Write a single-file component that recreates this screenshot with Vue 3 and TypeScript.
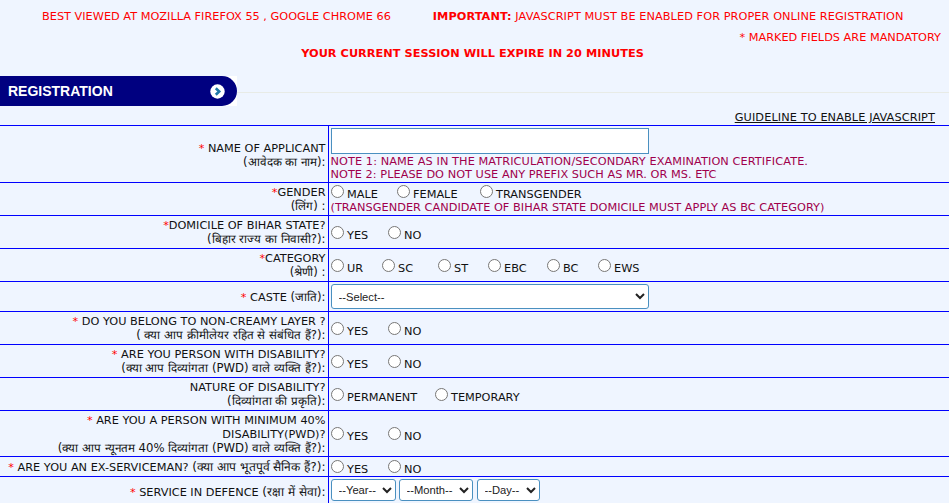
<script setup lang="ts">
interface Row {
  star?: string
  lines: string[]
  hindi: string
  opts: string[]
  h: number
  cols?: string
}
const rows: Row[] = [
  { star: '*', lines: ['DOMICILE OF BIHAR STATE?'], hindi: '(बिहार राज्य का निवासी?):', opts: ['YES', 'NO'], h: 33 },
  { star: '*', lines: ['CATEGORY'], hindi: '(श्रेणी) :', opts: ['UR', 'SC', 'ST', 'EBC', 'BC', 'EWS'], h: 33, cols: 'category' },
]
const after: Row[] = [
  { star: '* ', lines: ['DO YOU BELONG TO NON-CREAMY LAYER ?'], hindi: '( क्या आप क्रीमीलेयर रहित से संबंधित हैं?):', opts: ['YES', 'NO'], h: 33 },
  { star: '* ', lines: ['ARE YOU PERSON WITH DISABILITY?'], hindi: '(क्या आप दिव्यांगता (PWD) वाले व्यक्ति हैं?):', opts: ['YES', 'NO'], h: 33 },
  { lines: ['NATURE OF DISABILITY?'], hindi: '(दिव्यांगता की प्रकृति):', opts: ['PERMANENT', 'TEMPORARY'], h: 33, cols: 'nature' },
  { star: '* ', lines: ['ARE YOU A PERSON WITH MINIMUM 40%', 'DISABILITY(PWD)?'], hindi: '(क्या आप न्यूनतम 40% दिव्यांगता (PWD) वाले व्यक्ति हैं?):', opts: ['YES', 'NO'], h: 46 },
]
</script>

<template>
  <div class="page">
    <div class="notice-top">
      <span class="best">BEST VIEWED AT MOZILLA FIREFOX 55 , GOOGLE CHROME 66</span>
      <span class="important"><b>IMPORTANT:</b> JAVASCRIPT MUST BE ENABLED FOR PROPER ONLINE REGISTRATION</span>
    </div>
    <div class="mandatory">* MARKED FIELDS ARE MANDATORY</div>
    <div class="session">YOUR CURRENT SESSION WILL EXPIRE IN 20 MINUTES</div>

    <div class="banner-row">
      <div class="banner-back">
        <div class="banner">
          <span>REGISTRATION</span>
          <svg width="15" height="15" viewBox="0 0 15 15">
            <circle cx="7.5" cy="7.5" r="7.2" fill="#fff" />
            <path d="M5.8 4.2 L9.2 7.5 L5.8 10.8" fill="none" stroke="#1f78a8" stroke-width="2.6" />
          </svg>
        </div>
      </div>
      <div class="rule"></div>
    </div>

    <div class="guide"><a href="#">GUIDELINE TO ENABLE JAVASCRIPT</a></div>

    <table class="form">
      <tbody>
        <tr style="height: 57px">
          <th class="name"><span class="star">* </span>NAME OF APPLICANT<br /><span class="hi">(आवेदक का नाम):</span></th>
          <td class="top">
            <input class="text" type="text" />
            <div class="note">NOTE 1: NAME AS IN THE MATRICULATION/SECONDARY EXAMINATION CERTIFICATE.</div>
            <div class="note tight">NOTE 2: PLEASE DO NOT USE ANY PREFIX SUCH AS MR. OR MS. ETC</div>
          </td>
        </tr>
        <tr style="height: 33px">
          <th><span class="star">*</span>GENDER<br /><span class="hi">(लिंग) :</span></th>
          <td class="top">
            <div class="radios gender">
              <label><input type="radio" name="gender" /><span>MALE</span></label>
              <label><input type="radio" name="gender" /><span>FEMALE</span></label>
              <label><input type="radio" name="gender" /><span>TRANSGENDER</span></label>
            </div>
            <div class="note tight">(TRANSGENDER CANDIDATE OF BIHAR STATE DOMICILE MUST APPLY AS BC CATEGORY)</div>
          </td>
        </tr>
        <tr v-for="(r, i) in rows" :key="'a' + i" :style="{ height: r.h + 'px' }">
          <th>
            <span v-if="r.star" class="star">{{ r.star }}</span>
            <template v-for="l in r.lines" :key="l">{{ l }}<br /></template>
            <span class="hi">{{ r.hindi }}</span>
          </th>
          <td>
            <div class="radios" :class="r.cols">
              <label v-for="o in r.opts" :key="o"><input type="radio" :name="'a' + i" /><span>{{ o }}</span></label>
            </div>
          </td>
        </tr>
        <tr style="height: 30px">
          <th><span class="star">* </span>CASTE <span class="hi">(जाति):</span></th>
          <td><select class="caste"><option>--Select--</option></select></td>
        </tr>
        <tr v-for="(r, i) in after" :key="'b' + i" :style="{ height: r.h + 'px' }">
          <th>
            <span v-if="r.star" class="star">{{ r.star }}</span>
            <template v-for="l in r.lines" :key="l">{{ l }}<br /></template>
            <span class="hi">{{ r.hindi }}</span>
          </th>
          <td>
            <div class="radios" :class="r.cols">
              <label v-for="o in r.opts" :key="o"><input type="radio" :name="'b' + i" /><span>{{ o }}</span></label>
            </div>
          </td>
        </tr>
        <tr style="height: 20px">
          <th><span class="star">* </span>ARE YOU AN EX-SERVICEMAN? <span class="hi wide">(क्या आप भूतपूर्व सैनिक हैं?):</span></th>
          <td>
            <div class="radios">
              <label><input type="radio" name="ex" /><span>YES</span></label>
              <label><input type="radio" name="ex" /><span>NO</span></label>
            </div>
          </td>
        </tr>
        <tr style="height: 30px">
          <th><span class="star">* </span>SERVICE IN DEFENCE <span class="hi wide">(रक्षा में सेवा):</span></th>
          <td class="dates">
            <select class="year"><option>--Year--</option></select>
            <select class="month"><option>--Month--</option></select>
            <select class="day"><option>--Day--</option></select>
          </td>
        </tr>
      </tbody>
    </table>
  </div>
</template>

<style>
html, body { margin: 0; background: #eff5ff; overflow: hidden; }
</style>

<style scoped>
.page {
  width: 949px;
  font-family: "DejaVu Sans", Verdana, sans-serif;
  font-size: 11.3px;
  color: #111;
}
.notice-top {
  display: flex;
  gap: 42px;
  padding: 10px 0 0 42px;
  height: 16px;
  line-height: 13px;
  color: #f00;
}
.important { letter-spacing: 0.07px; }
.mandatory {
  color: #f00;
  text-align: right;
  padding-right: 8px;
  line-height: 13px;
  height: 16px;
  margin-top: 5px;
}
.session {
  color: #f00;
  font-weight: bold;
  text-align: center;
  line-height: 13px;
  height: 29px;
  letter-spacing: 0.04px;
  margin-left: -4px;
}
.banner-row { display: flex; align-items: center; height: 30px; }
.banner-back { background: #fff; flex: none; }
.banner {
  width: 237px;
  height: 30px;
  box-sizing: border-box;
  background: #000080;
  border-radius: 0 15px 15px 0;
  color: #fff;
  font: bold 14px "Liberation Sans", Arial, sans-serif;
  display: flex;
  align-items: center;
  justify-content: space-between;
  padding: 0 12px 0 8px;
}
.rule { flex: 1; height: 1px; background: #e8ebe6; margin-top: 2px; }
.guide { text-align: right; padding: 5px 14px 0 0; height: 14px; line-height: 14px; letter-spacing: 0.1px; }
.guide a { color: #111; text-decoration: underline; }
.form { width: 949px; border-collapse: collapse; table-layout: fixed; }
.form tr { border-top: 1px solid #00f; border-bottom: 1px solid #00f; }
.form th {
  width: 328px;
  box-sizing: border-box;
  font-weight: normal;
  text-align: right;
  padding: 2px 2px 0 0;
  border-right: 1px solid #00f;
  line-height: 14px;
}
.form th.name { padding-top: 4px; }
.form td { padding: 0 2px; line-height: 13px; vertical-align: middle; }
.form td.top { vertical-align: top; }
.star { color: #f00; }
.hi { font-size: 11.7px; line-height: 12px; }
.hi.wide { font-size: 12.1px; }
.note { color: #a0004c; line-height: 13px; letter-spacing: 0.08px; }
.note.tight { letter-spacing: 0.03px; }
.text {
  display: block;
  width: 318px;
  height: 26px;
  box-sizing: border-box;
  border: 1px solid #4a90c0;
  background: #fff;
  margin: 2px 0 1px;
  padding: 0;
}
.radios {
  display: grid;
  grid-template-columns: 57px auto;
  justify-content: start;
  padding-top: 3px;
  line-height: 13px;
}
.radios.gender { grid-template-columns: 66px 83px auto; padding-top: 2px; }
.radios.category { grid-template-columns: 51px 56px 50px 59px 51px auto; }
.radios.nature { grid-template-columns: 104px auto; }
.radios label { display: flex; align-items: flex-start; }
.radios input { margin: 0 3.5px 0 0; width: 13px; height: 13px; }
.radios span { margin-top: 3px; }
select {
  border: 1px solid #4a90c0;
  border-radius: 3px;
  background: #fff;
  font: 11.2px Arial, "Liberation Sans", sans-serif;
  color: #222;
  padding-left: 3px;
}
.caste { width: 318px; height: 25px; display: block; }
.year, .month, .day { height: 22px; }
.year { width: 65px; }
.month { width: 74px; margin: 0 4px 0 3px; }
.day { width: 63px; }
.form td.dates { white-space: nowrap; font-size: 0; vertical-align: top; padding-top: 2px; }
</style>
